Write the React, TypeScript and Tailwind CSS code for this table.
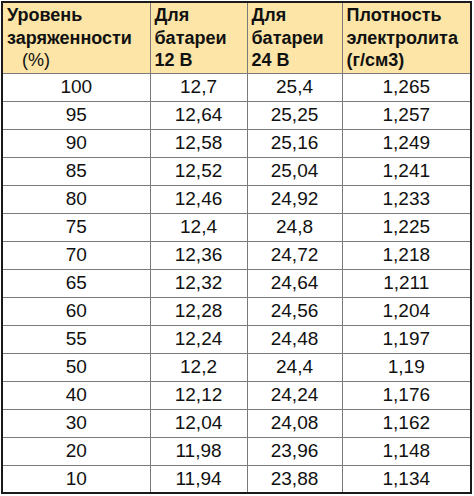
import React from 'react';

const ROWS: [string, string, string, string][] = [
  ['100', '12,7', '25,4', '1,265'],
  ['95', '12,64', '25,25', '1,257'],
  ['90', '12,58', '25,16', '1,249'],
  ['85', '12,52', '25,04', '1,241'],
  ['80', '12,46', '24,92', '1,233'],
  ['75', '12,4', '24,8', '1,225'],
  ['70', '12,36', '24,72', '1,218'],
  ['65', '12,32', '24,64', '1,211'],
  ['60', '12,28', '24,56', '1,204'],
  ['55', '12,24', '24,48', '1,197'],
  ['50', '12,2', '24,4', '1,19'],
  ['40', '12,12', '24,24', '1,176'],
  ['30', '12,04', '24,08', '1,162'],
  ['20', '11,98', '23,96', '1,148'],
  ['10', '11,94', '23,88', '1,134'],
];

const App: React.FC = () => {
  return (
    <div className="w-[474px] h-[496px] bg-white p-[1px] font-['Liberation_Sans',Arial,sans-serif] text-[#111]">
      <table className="w-[471px] border-collapse border-2 border-[#1a1a1a] table-fixed">
        <colgroup>
          <col className="w-[148px]" />
          <col className="w-[97px]" />
          <col className="w-[95px]" />
          <col />
        </colgroup>
        <thead>
          <tr className="h-[71px] bg-[#fce5a7]">
            <th className="border border-[#7a7a7a] px-[4px] pt-[1px] text-left align-top text-[18px] leading-[22.5px] font-bold">
              Уровень<br />заряженности<br /><span className="pl-[15px] font-normal">(%)</span>
            </th>
            <th className="border border-[#7a7a7a] px-[4px] pt-[1px] text-left align-top text-[18px] leading-[22.5px] font-bold">
              Для<br />батареи<br />12 В
            </th>
            <th className="border border-[#7a7a7a] px-[4px] pt-[1px] text-left align-top text-[18px] leading-[22.5px] font-bold">
              Для<br />батареи<br />24 В
            </th>
            <th className="border border-[#7a7a7a] px-[4px] pt-[1px] text-left align-top text-[18px] leading-[22.5px] font-bold">
              Плотность<br />электролита<br />(г/см3)
            </th>
          </tr>
        </thead>
        <tbody>
          {ROWS.map(r => (
            <tr key={r[0]} className="h-[28px]">
              {r.map((v, i) => (
                <td key={i} className="border border-[#7a7a7a] p-0 text-center text-[19px] leading-[20px]">{v}</td>
              ))}
            </tr>
          ))}
        </tbody>
      </table>
    </div>
  );
};

export default App;
